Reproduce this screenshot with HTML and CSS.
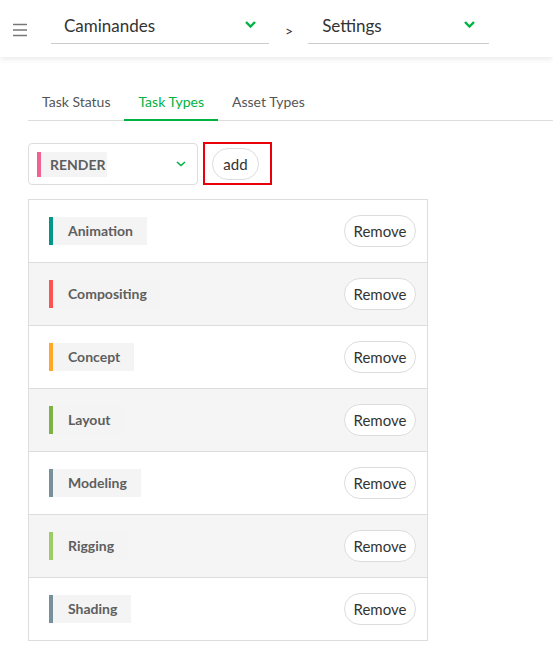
FILE: index.html
```html
<!DOCTYPE html>
<html>
<head>
<meta charset="utf-8">
<link rel="stylesheet" href="styles.css">
</head>
<body>
<header class="topbar">
  <div class="menu-icon">
    <svg width="14" height="14" viewBox="0 0 14 14"><path d="M0 1.5H14M0 7H14M0 12.5H14" stroke="#777" stroke-width="1.6" fill="none"/></svg>
  </div>
  <div class="nav-select nav-production">
    <span class="nav-text">Caminandes</span>
    <svg class="chev" width="11" height="7" viewBox="0 0 11 7"><path d="M1 1L5.5 5.5L10 1" stroke="#00b242" stroke-width="2.4" fill="none"/></svg>
  </div>
  <span class="nav-sep">&gt;</span>
  <div class="nav-select nav-section">
    <span class="nav-text">Settings</span>
    <svg class="chev" width="11" height="7" viewBox="0 0 11 7"><path d="M1 1L5.5 5.5L10 1" stroke="#00b242" stroke-width="2.4" fill="none"/></svg>
  </div>
</header>

<main class="page">
  <ul class="tabs">
    <li class="tab">Task Status</li>
    <li class="tab active">Task Types</li>
    <li class="tab">Asset Types</li>
  </ul>

  <div class="add-row">
    <div class="type-select">
      <span class="tag tag-render">RENDER</span>
      <svg class="chev-small" width="10" height="6" viewBox="0 0 10 6"><path d="M1 1L5 4.5L9 1" stroke="#00b242" stroke-width="1.6" fill="none"/></svg>
    </div>
    <div class="highlight">
      <button class="pill-btn add-btn">add</button>
    </div>
  </div>

  <div class="type-list">
    <div class="type-row"><span class="tag c-anim">Animation</span><button class="pill-btn remove-btn">Remove</button></div>
    <div class="type-row"><span class="tag c-comp">Compositing</span><button class="pill-btn remove-btn">Remove</button></div>
    <div class="type-row"><span class="tag c-concept">Concept</span><button class="pill-btn remove-btn">Remove</button></div>
    <div class="type-row"><span class="tag c-layout">Layout</span><button class="pill-btn remove-btn">Remove</button></div>
    <div class="type-row"><span class="tag c-model">Modeling</span><button class="pill-btn remove-btn">Remove</button></div>
    <div class="type-row"><span class="tag c-rig">Rigging</span><button class="pill-btn remove-btn">Remove</button></div>
    <div class="type-row"><span class="tag c-shade">Shading</span><button class="pill-btn remove-btn">Remove</button></div>
  </div>
</main>
</body>
</html>
```

FILE: styles.css
```css
* { box-sizing: border-box; }

body {
  margin: 0;
  font-family: Lato, "Open Sans", sans-serif;
  color: #333;
  background: #fff;
}

.topbar {
  height: 57px;
  display: flex;
  align-items: flex-start;
  padding: 9px 0 0 13px;
  box-shadow: 0 2px 6px rgba(0, 0, 0, 0.09);
}

.menu-icon {
  width: 14px;
  height: 14px;
  margin-top: 14px;
}
.menu-icon svg { display: block; }

.nav-select {
  height: 35px;
  border-bottom: 1px solid #ccc;
  display: flex;
  align-items: center;
  justify-content: space-between;
  padding: 0 13px 2px 13px;
}
.nav-production { width: 218px; margin-left: 24px; }
.nav-section { width: 181px; padding-left: 14px; padding-right: 14px; }

.nav-text {
  font-size: 17px;
  color: #333;
}

.chev { display: block; margin-top: -2px; }

.nav-sep {
  font-size: 14px;
  color: #333;
  margin: 13px 15px 0 16px;
}

.page {
  padding: 0 0 0 28px;
}

.tabs {
  list-style: none;
  margin: 35px 0 0 0;
  padding: 0;
  display: flex;
  border-bottom: 1px solid #ddd;
}

.tab {
  font-size: 14px;
  color: #555;
  padding: 0 14px 8px 14px;
  line-height: 19px;
}

.tab.active {
  color: #00b242;
  border-bottom: 2px solid #00b242;
  margin-bottom: -1px;
}

.add-row {
  display: flex;
  align-items: center;
  margin-top: 22px;
  gap: 5px;
}

.type-select {
  width: 170px;
  height: 42px;
  border: 1px solid #ddd;
  border-radius: 4px;
  display: flex;
  align-items: center;
  justify-content: space-between;
  padding: 0 11px 0 8px;
}

.chev-small { display: block; }

.highlight {
  border: 2px solid #e8000b;
  padding: 4px 11px 3px 7px;
  margin-top: -1px;
}

.pill-btn {
  font-family: Lato, "Open Sans", sans-serif;
  font-size: 15px;
  color: #333;
  background: #fff;
  border: 1px solid #ddd;
  border-radius: 16px;
  height: 32px;
  padding: 0;
  display: block;
}

.add-btn { width: 47px; }
.remove-btn { width: 72px; }

.tag {
  display: inline-block;
  font-weight: bold;
  font-size: 14px;
  color: #5e5e5e;
  background: #f4f4f4;
  border-left: 4px solid #999;
  height: 28px;
  line-height: 28px;
  padding: 0 14px 0 15px;
}

.tag-render {
  border-left-color: #f06292;
  height: 25px;
  line-height: 25px;
  padding: 0 9px 0 9px;
  width: 70px;
}

.type-list {
  margin-top: 14px;
  width: 400px;
  border: 1px solid #ddd;
}

.type-row {
  height: 63px;
  display: flex;
  align-items: center;
  justify-content: space-between;
  padding: 0 11px 0 20px;
  border-top: 1px solid #ddd;
}
.type-row:first-child { border-top: none; height: 62px; }
.type-row:nth-child(even) { background: #f5f5f5; }

.c-anim { border-left-color: #009688; }
.c-comp { border-left-color: #ff5252; }
.c-concept { border-left-color: #ffa726; }
.c-layout { border-left-color: #7cb342; }
.c-model { border-left-color: #78909c; }
.c-rig { border-left-color: #9ccc65; }
.c-shade { border-left-color: #78909c; }
```
